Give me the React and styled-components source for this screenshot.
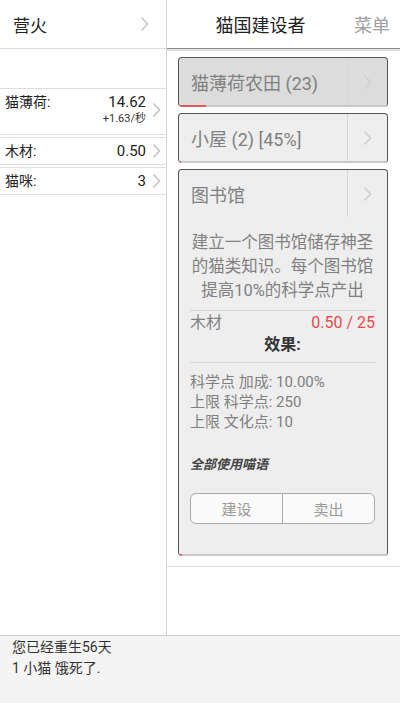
import React from 'react'
import styled, { createGlobalStyle } from 'styled-components'

const GlobalStyle = createGlobalStyle`
  html, body {
    margin: 0;
    padding: 0;
    background: #fff;
  }
  body {
    font-family: Roboto, "Noto Sans CJK SC", sans-serif;
  }
  * {
    box-sizing: border-box;
  }
`

const Screen = styled.div`
  width: 400px;
  height: 703px;
  display: flex;
  flex-direction: column;
  overflow: hidden;
`

const Main = styled.div`
  flex: 1;
  display: flex;
  min-height: 0;
`

const LeftCol = styled.div`
  width: 167px;
  border-right: 1px solid #d4d4d4;
  display: flex;
  flex-direction: column;
`

const LeftHeader = styled.div`
  height: 49px;
  border-bottom: 1px solid #dcdcdc;
  display: flex;
  align-items: center;
  justify-content: space-between;
  padding: 0 17px 0 13px;
  font-size: 17px;
  color: #222;
`

const ResourceList = styled.div`
  margin-top: 39px;
  display: flex;
  flex-direction: column;
  gap: 2px;
`

const ResourceRow = styled.div`
  display: flex;
  align-items: center;
  border-top: 1px solid #dedede;
  border-bottom: 1px solid #dedede;
  padding: 4px 5px ${p => (p.$tall ? '7px' : '4px')} 5px;
  font-size: 14px;
  line-height: 18px;
  color: #222;
`

const ResLabel = styled.div`
  flex: 1;
  align-self: flex-start;
`

const ResValues = styled.div`
  display: flex;
  flex-direction: column;
  align-items: flex-end;
  margin-right: 6px;
`

const ResValue = styled.div`
  font-size: 15px;
  line-height: 18px;
`

const ResRate = styled.div`
  font-size: 11px;
  line-height: 16px;
  color: #333;
`

const RightCol = styled.div`
  flex: 1;
  display: flex;
  flex-direction: column;
`

const RightHeader = styled.div`
  height: 49px;
  display: flex;
  align-items: center;
  padding-right: 10px;
  border-bottom: 1px solid #8a8a8a;
  box-shadow: 0 2px 0 #e2e2e2;
`

const AppTitle = styled.div`
  flex: 1;
  text-align: center;
  font-size: 18px;
  color: #222;
`

const MenuLink = styled.div`
  font-size: 18px;
  color: #a0a0a0;
`

const CardList = styled.div`
  padding: 8px 12px 10px 11px;
  display: flex;
  flex-direction: column;
  gap: 6px;
  border-bottom: 1px solid #dcdcdc;
`

const Card = styled.div`
  border: 1px solid #555;
  border-bottom: none;
  border-radius: 4px;
  background: ${p => (p.$active ? '#dcdcdc' : '#eeeeee')};
  overflow: hidden;
  display: flex;
  flex-direction: column;
`

const CardHead = styled.div`
  display: flex;
  height: 47px;
`

const CardTitle = styled.div`
  flex: 1;
  display: flex;
  align-items: center;
  padding-left: 12px;
  font-size: 18px;
  color: #808080;
`

const ArrowCell = styled.div`
  width: 40px;
  border-left: 1px solid #d8d8d8;
  display: flex;
  align-items: center;
  justify-content: center;
`

const Track = styled.div`
  height: 2px;
  background: #c9c9c9;
`

const Fill = styled.div`
  height: 100%;
  background: #e85858;
`

const CardBody = styled.div`
  padding: 14px 12px 30px 11px;
  display: flex;
  flex-direction: column;
`

const Description = styled.div`
  text-align: center;
  font-size: 16.5px;
  line-height: 24px;
  color: #808080;
`

const Separator = styled.div`
  height: 1px;
  background: #d6d6d6;
  margin: ${p => p.$m || '7px 0 2px'};
`

const PriceRow = styled.div`
  display: flex;
  justify-content: space-between;
  font-size: 16px;
  line-height: 20px;
  color: #808080;
`

const PriceValue = styled.span`
  color: #e84a4a;
`

const EffectsTitle = styled.div`
  text-align: center;
  font-size: 16px;
  font-weight: bold;
  line-height: 20px;
  color: #333;
  margin-top: 2px;
`

const EffectLine = styled.div`
  font-size: 15px;
  line-height: 20px;
  color: #808080;
`

const Flavor = styled.div`
  margin-top: 24px;
  font-size: 13px;
  line-height: 18px;
  font-style: italic;
  font-weight: bold;
  color: #444;
`

const ButtonGroup = styled.div`
  margin-top: 19px;
  display: flex;
  height: 31px;
  border: 1px solid #aaa;
  border-radius: 6px;
  overflow: hidden;
  background: #fafafa;
`

const GroupButton = styled.div`
  flex: 1;
  display: flex;
  align-items: center;
  justify-content: center;
  font-size: 15px;
  color: #9a9a9a;
  & + & {
    border-left: 1px solid #aaa;
  }
`

const Footer = styled.div`
  height: 68px;
  background: #f4f4f4;
  border-top: 1px solid #cfcfcf;
  padding: 1px 12px 0;
  font-size: 14px;
  line-height: 21px;
  color: #333;
`

const Chevron = ({ color = '#c4c4c4' }) => (
  <svg width="9" height="16" viewBox="0 0 9 16">
    <polyline points="1.5,1.5 7.5,8 1.5,14.5" fill="none" stroke={color} strokeWidth="1.6" />
  </svg>
)

const resources = [
  { name: '猫薄荷:', value: '14.62', rate: '+1.63/秒' },
  { name: '木材:', value: '0.50' },
  { name: '猫咪:', value: '3' }
]

const BuildingCard = ({ title, progress, active, children }) => (
  <Card $active={active}>
    <CardHead>
      <CardTitle>{title}</CardTitle>
      <ArrowCell><Chevron color="#cfcfcf" /></ArrowCell>
    </CardHead>
    {children}
    <Track>
      <Fill style={{ width: `${progress}%` }} />
    </Track>
  </Card>
)

const App = () => {
  return (
    <Screen>
      <GlobalStyle />
      <Main>
        <LeftCol>
          <LeftHeader>
            <span>营火</span>
            <Chevron />
          </LeftHeader>
          <ResourceList>
            {resources.map(r => (
              <ResourceRow key={r.name} $tall={!!r.rate}>
                <ResLabel>{r.name}</ResLabel>
                <ResValues>
                  <ResValue>{r.value}</ResValue>
                  {r.rate && <ResRate>{r.rate}</ResRate>}
                </ResValues>
                <Chevron />
              </ResourceRow>
            ))}
          </ResourceList>
        </LeftCol>
        <RightCol>
          <RightHeader>
            <AppTitle>猫国建设者</AppTitle>
            <MenuLink>菜单</MenuLink>
          </RightHeader>
          <CardList>
            <BuildingCard title="猫薄荷农田 (23)" progress={13} active />
            <BuildingCard title="小屋 (2) [45%]" progress={1} />
            <BuildingCard title="图书馆" progress={1.5}>
              <CardBody>
                <Description>
                  建立一个图书馆储存神圣的猫类知识。每个图书馆提高10%的科学点产出
                </Description>
                <Separator />
                <PriceRow>
                  <span>木材</span>
                  <PriceValue>0.50 / 25</PriceValue>
                </PriceRow>
                <EffectsTitle>效果:</EffectsTitle>
                <Separator $m="7px 0 9px" />
                <EffectLine>科学点 加成: 10.00%</EffectLine>
                <EffectLine>上限 科学点: 250</EffectLine>
                <EffectLine>上限 文化点: 10</EffectLine>
                <Flavor>全部使用喵语</Flavor>
                <ButtonGroup>
                  <GroupButton>建设</GroupButton>
                  <GroupButton>卖出</GroupButton>
                </ButtonGroup>
              </CardBody>
            </BuildingCard>
          </CardList>
        </RightCol>
      </Main>
      <Footer>
        <div>您已经重生56天</div>
        <div>1 小猫 饿死了.</div>
      </Footer>
    </Screen>
  )
}

export default App
